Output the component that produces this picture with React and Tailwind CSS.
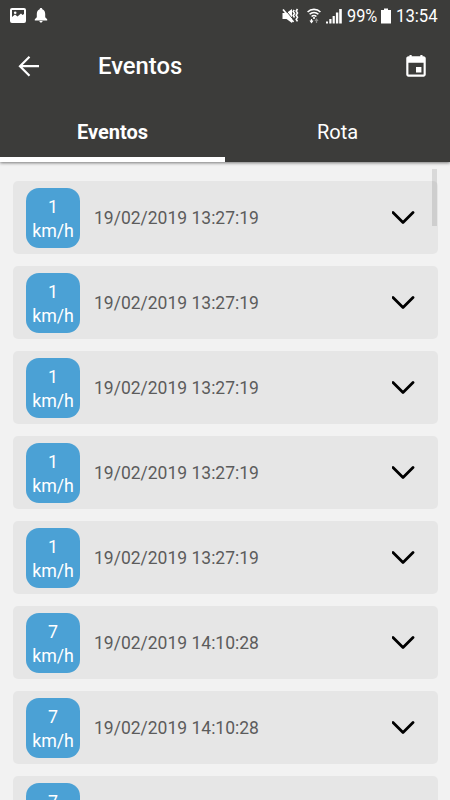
const tabs = [
  { label: "Eventos", active: true },
  { label: "Rota", active: false },
];

const events = [
  { id: 1, speed: 1, date: "19/02/2019 13:27:19" },
  { id: 2, speed: 1, date: "19/02/2019 13:27:19" },
  { id: 3, speed: 1, date: "19/02/2019 13:27:19" },
  { id: 4, speed: 1, date: "19/02/2019 13:27:19" },
  { id: 5, speed: 1, date: "19/02/2019 13:27:19" },
  { id: 6, speed: 7, date: "19/02/2019 14:10:28" },
  { id: 7, speed: 7, date: "19/02/2019 14:10:28" },
  { id: 8, speed: 7, date: "19/02/2019 14:10:28" },
];

function PictureIcon() {
  return (
    <svg className="h-[15px] w-4" viewBox="0 0 16 15" fill="none">
      <rect x="1" y="1" width="14" height="13" rx="1" stroke="white" strokeWidth="2" />
      <circle cx="5.2" cy="4.8" r="1.3" fill="white" />
      <path d="M2 9l3-2.5 2.500 2L11 5.500l1.500 1.500L14 6v7H2z" fill="white" />
    </svg>
  );
}

function BellIcon() {
  return (
    <svg className="h-4 w-3.5" viewBox="0 0 14 16" fill="white">
      <path d="M7 1c.8 0 1.3.5 1.3 1.3C10.300 3 11.200 4.800 11.200 7v3.200l2 2v1.200H.8v-1.200l2-2V7c0-2.200.9-4 2.900-4.700C5.700 1.500 6.200 1 7 1zM5.400 14h3.200c0 .9-.7 1.500-1.600 1.500S5.400 14.900 5.400 14z" />
    </svg>
  );
}

function MuteIcon() {
  return (
    <svg className="h-4 w-[17px]" viewBox="0 0 17 16" fill="white">
      <path d="M.5 5h4L10 1v14l-5.500-4h-4z" />
      <path d="M3 1.500L12 12.500" stroke="#3c3c3a" strokeWidth="1" />
      <path d="M1 1.500L11.500 14" stroke="white" strokeWidth="1.700" />
      <path d="M12.200 2l-1 1.500 1.300 2-1.300 2 1.300 2M15.500 1l-1.300 2 1.300 2-1.300 2.200 1.300 2-1.300 2.200 1.300 2" fill="none" stroke="white" strokeWidth="1.600" />
    </svg>
  );
}

function WifiIcon() {
  return (
    <svg className="h-4 w-3.5" viewBox="0 0 14 16" fill="none" stroke="white" strokeWidth="1.600">
      <path d="M.6 4C4 .5 10 .5 13.400 4M2.600 6.300c2.400-2.500 6.400-2.500 8.800 0M4.600 8.500c1.400-1.400 3.400-1.400 4.800 0" />
      <circle cx="7" cy="10" r="1.100" fill="white" stroke="none" />
      <path d="M4.500 11v3M3 12.500l1.500 2 1.500-2" strokeWidth="1.200" />
      <path d="M9.500 15v-3M8 13l1.500-2 1.500 2" stroke="#8a8a88" strokeWidth="1.200" />
    </svg>
  );
}

function SignalIcon() {
  return (
    <svg className="h-4 w-4" viewBox="0 0 16 16" fill="white">
      <path d="M0 13.500h2V15.500H0zM3.300 11h2.200v4.500H3.300zM6.600 8h2.200v7.500H6.600zM9.900 4.500h2.400v11H9.900zM13.200 1h2.600v14.500h-2.600z" />
    </svg>
  );
}

function StatusBar() {
  return (
    <div className="flex h-8 items-center justify-between pr-3 pl-2.5 text-white">
      <div className="flex items-center gap-2 pb-0.5">
        <PictureIcon />
        <BellIcon />
      </div>
      <div className="flex items-center pb-px">
        <MuteIcon />
        <span className="ml-2 flex">
          <WifiIcon />
        </span>
        <span className="ml-[5px] flex">
          <SignalIcon />
        </span>
        <span className="ml-[5px] w-[31px] origin-left scale-x-[0.86] text-[19px] leading-none whitespace-nowrap">
          99%
        </span>
        <svg className="ml-[3px] h-4 w-2.5" viewBox="0 0 10 16" fill="white">
          <path d="M3 .5h4V2h3v13.500H0V2h3z" />
        </svg>
        <span className="ml-[5px] w-[42px] origin-left scale-x-[0.88] text-[19px] leading-none whitespace-nowrap">
          13:54
        </span>
      </div>
    </div>
  );
}

function Toolbar() {
  return (
    <div className="flex h-[70px] items-center pr-[21px] pl-4 text-white">
      <button type="button" aria-label="Voltar">
        <svg className="h-[26px] w-[26px]" viewBox="0 0 26 26" fill="none" stroke="white" strokeWidth="2.200">
          <path d="M23 12.200H4.500M13.500 2.700L4 12.200l9.500 9.500" />
        </svg>
      </button>
      <h1 className="ml-14 flex-1 text-[23.800px] leading-none font-medium">Eventos</h1>
      <button type="button" aria-label="Calendário">
        <svg className="h-[26px] w-[26px]" viewBox="0 0 24 24" fill="white">
          <path d="M17 12h-5v5h5v-5zM16 1v1H8V1H6v1H5c-1.110 0-1.990.9-1.990 2L3 19c0 1.100.89 2 2 2h14c1.100 0 2-.9 2-2V4c0-1.100-.9-2-2-2h-1V1h-2zm3 18H5V8h14v11z" />
        </svg>
      </button>
    </div>
  );
}

function EventCard({ speed, date }) {
  return (
    <div className="flex h-[73px] shrink-0 items-center rounded-[5px] bg-[#e6e6e6] pr-[22px] pl-[13px]">
      <div className="flex h-[60px] w-[54px] flex-col items-center justify-center rounded-[13px] bg-[#4ba1d5] pt-0.5 text-[17.800px] leading-6 text-white">
        <span>{speed}</span>
        <span>km/h</span>
      </div>
      <span className="ml-3.5 flex-1 pt-0.5 text-[17.500px] text-[#5c5c5c]">{date}</span>
      <svg className="h-4 w-6" viewBox="0 0 24 16" fill="none" stroke="black" strokeWidth="2.800" strokeLinecap="round" strokeLinejoin="round">
        <path d="M1 2.500l10 10 10-10" />
      </svg>
    </div>
  );
}

export default function App() {
  return (
    <div className="flex h-[800px] w-[450px] flex-col overflow-hidden bg-[#f2f2f2] font-['Roboto','Liberation_Sans',sans-serif]">
      <header className="relative z-10 shrink-0 bg-[#3c3c3a] shadow-[0_1px_3px_rgba(0,0,0,0.5)]">
        <StatusBar />
        <Toolbar />
        <nav className="flex h-[60px] text-[20px] text-white">
          {tabs.map(({ label, active }) => (
            <button
              key={label}
              type="button"
              className={`flex-1 border-b-[5px] pt-1 ${
                active ? "border-white font-bold" : "border-transparent"
              }`}
            >
              {label}
            </button>
          ))}
        </nav>
      </header>

      <main className="relative flex min-h-0 flex-1 flex-col gap-3 overflow-hidden pt-[19px] pr-3 pl-[13px]">
        {events.map((event) => (
          <EventCard key={event.id} speed={event.speed} date={event.date} />
        ))}

        {/* Scroll thumb */}
        <div className="absolute top-[7px] right-[13px] h-[57px] w-[5px] bg-black/10" />
      </main>
    </div>
  );
}
